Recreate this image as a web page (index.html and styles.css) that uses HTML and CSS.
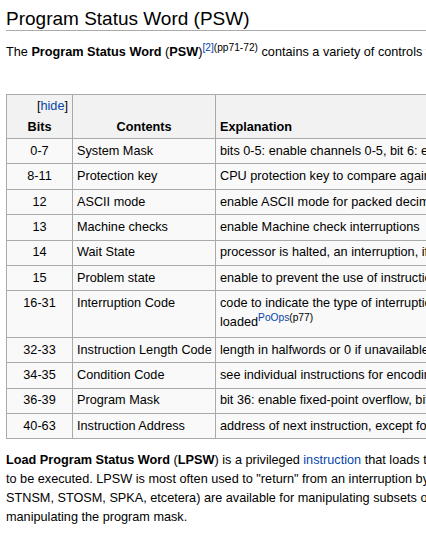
FILE: index.html
```html
<!DOCTYPE html>
<html>
<head>
<meta charset="utf-8">
<title>Program Status Word (PSW)</title>
<link rel="stylesheet" href="styles.css">
</head>
<body>
<div class="content">
  <h2 class="section-title">Program Status Word (PSW)</h2>
  <p class="para lead">The <b>Program Status Word</b> (<b>PSW</b>)<sup class="ref"><a href="#">[2]</a>(pp71-72)</sup> contains a variety of controls for the current program state.</p>

  <table class="wikitable">
    <colgroup>
      <col class="col-bits">
      <col class="col-contents">
      <col class="col-expl">
    </colgroup>
    <thead>
      <tr>
        <th class="hd hd-bits"><div class="toggle">[<a href="#">hide</a>]</div>Bits</th>
        <th class="hd">Contents</th>
        <th class="hd hd-left">Explanation</th>
      </tr>
    </thead>
    <tbody>
      <tr><td class="bits">0-7</td><td>System Mask</td><td class="expl">bits 0-5: enable channels 0-5, bit 6: enable channels 6 and up, bit 7: enable external interruptions</td></tr>
      <tr><td class="bits">8-11</td><td>Protection key</td><td class="expl">CPU protection key to compare against storage key</td></tr>
      <tr><td class="bits">12</td><td>ASCII mode</td><td class="expl">enable ASCII mode for packed decimal instructions</td></tr>
      <tr><td class="bits">13</td><td>Machine checks</td><td class="expl">enable Machine check interruptions</td></tr>
      <tr><td class="bits">14</td><td>Wait State</td><td class="expl">processor is halted, an interruption, if enabled, will resume execution</td></tr>
      <tr><td class="bits">15</td><td>Problem state</td><td class="expl">enable to prevent the use of instructions that are privileged</td></tr>
      <tr class="tall"><td class="bits">16-31</td><td>Interruption Code</td><td class="expl">code to indicate the type of interruption that occurred, stored when the PSW is stored; ignored when the PSW is<br>loaded<sup class="ref"><a href="#">PoOps</a>(p77)</sup></td></tr>
      <tr><td class="bits">32-33</td><td class="nowrap">Instruction Length Code</td><td class="expl">length in halfwords or 0 if unavailable</td></tr>
      <tr><td class="bits">34-35</td><td>Condition Code</td><td class="expl">see individual instructions for encoding</td></tr>
      <tr><td class="bits">36-39</td><td>Program Mask</td><td class="expl">bit 36: enable fixed-point overflow, bit 37: enable decimal overflow, bit 38: enable exponent underflow, bit 39: enable significance</td></tr>
      <tr><td class="bits">40-63</td><td>Instruction Address</td><td class="expl">address of next instruction, except following an interruption</td></tr>
    </tbody>
  </table>

  <p class="para tail"><b>Load Program Status Word</b> (<b>LPSW</b>) is a privileged <a href="#">instruction</a> that loads the Program Status Word (PSW), including the address of the next instruction<br>to be executed. LPSW is most often used to "return" from an interruption by reloading the old PSW saved during the interruption. Other instructions (SSM,<br>STNSM, STOSM, SPKA, etcetera) are available for manipulating subsets of the PSW without causing a new instruction to be executed; SPM for<br>manipulating the program mask.</p>
</div>
</body>
</html>
```

FILE: styles.css
```css
html, body {
  margin: 0;
  padding: 0;
  overflow: hidden;
  background: #fff;
}

body {
  font-family: "Liberation Sans", Arial, sans-serif;
  font-size: 12.7px;
  line-height: 19px;
  color: #000;
}

a {
  color: #0645ad;
  text-decoration: none;
}

.content {
  padding-left: 6px;
  width: 1100px;
}

.section-title {
  font-size: 19px;
  font-weight: normal;
  line-height: 22px;
  margin: 8px 0 0;
  padding: 0;
  border-bottom: 1px solid #aaa;
}

.para {
  margin: 0;
  white-space: nowrap;
}

.lead {
  margin-top: 11.5px;
}

.tail {
  margin-top: 12px;
}

.ref {
  font-size: 10.2px;
  line-height: 1;
  vertical-align: super;
}

.wikitable {
  margin-top: 32px;
  border-collapse: collapse;
  border: 1px solid #aaa;
  background: #f9f9f9;
  table-layout: fixed;
  width: 1000px;
}

.col-bits { width: 66px; }
.col-contents { width: 143px; }

.wikitable th,
.wikitable td {
  border: 1px solid #aaa;
  padding: 2.7px 4px;
  vertical-align: top;
  text-align: left;
}

.wikitable th.hd {
  background: #f2f2f2;
  font-weight: bold;
  text-align: center;
  vertical-align: bottom;
  padding-bottom: 0.7px;
}

.wikitable th.hd-left {
  text-align: left;
}

.toggle {
  font-weight: normal;
  text-align: right;
  margin-bottom: 2px;
}

.wikitable td.bits {
  text-align: center;
}

.wikitable tr.tall td {
  padding-bottom: 4.7px;
}

.wikitable td.expl,
.wikitable td.nowrap {
  white-space: nowrap;
}
```
